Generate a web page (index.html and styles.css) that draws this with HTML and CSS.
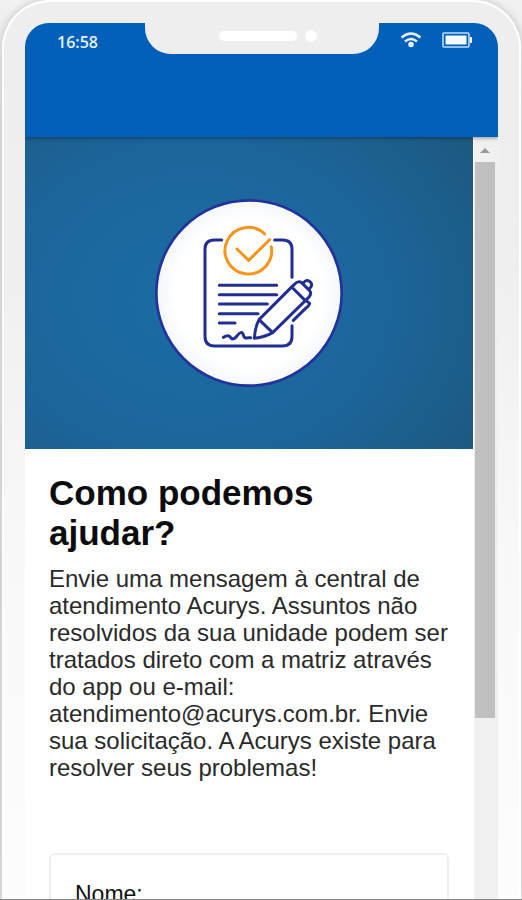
FILE: index.html
```html
<!DOCTYPE html>
<html lang="pt-BR">
<head>
<meta charset="utf-8">
<meta name="viewport" content="width=device-width, initial-scale=1">
<title>Como podemos ajudar?</title>
<link rel="stylesheet" href="styles.css">
</head>
<body>
<div class="phone">
  <div class="screen">
    <header class="app-bar">
      <div class="status-left"><time>16:58</time></div>
      <div class="notch"><span class="speaker"></span><span class="camera"></span></div>
      <div class="status-right">
        <svg class="wifi" viewBox="0 0 22 16" aria-hidden="true">
          <path d="M1.500 5.500Q11-2.500 20.500 5.500M5 9.500Q11 4.500 17 9.500"/>
          <circle cx="11" cy="12.500" r="2.800"/>
        </svg>
        <svg class="battery" viewBox="0 0 30 16" aria-hidden="true">
          <rect class="case" x="1" y="1" width="26" height="14" rx="1"/>
          <rect class="charge" x="3.500" y="3.500" width="21" height="9"/>
          <path class="charge" d="M28 5h1q1 0 1 1v4q0 1-1 1h-1z"/>
        </svg>
      </div>
    </header>
    <div class="viewport">
      <main class="page">
        <div class="banner">
          <svg class="emblem" viewBox="27 25 570 570" aria-hidden="true">
            <defs>
              <radialGradient id="disc"><stop offset=".8" stop-color="#fff"/><stop offset="1" stop-color="#f3f6f9"/></radialGradient>
            </defs>
            <circle cx="312" cy="310" r="278" fill="url(#disc)" stroke="#22329a" stroke-width="8"/>
            <g class="ink">
              <path d="M230 151H208Q180 151 180 179V440Q180 469 208 469H413Q441 469 441 440V408M389 151H413Q441 151 441 179V263"/>
              <path d="M223 287H395M223 315H395M223 343H367M223 372H339M223 400H270"/>
              <path d="M235 443C247 436 254 437 258 445C264 452 270 446 276 439C284 427 292 425 295 436C297 447 303 445 317 444"/>
              <path d="M328 446Q330 413 342 390L447 285Q458 272 469 278L494 303Q501 312 491 323L383 429Q360 442 328 446ZM342 390L383 429M440 292L481 333M475 280Q485 266 496 277Q505 286 493 298M482 332L494 341Q492 349 484 354L445 392"/>
            </g>
            <g class="accent">
              <path d="M359 133A70 70 0 1 0 379 171"/>
              <path d="M276 178L311 212L374 150"/>
            </g>
          </svg>
        </div>
        <section class="content">
          <h1>Como podemos ajudar?</h1>
          <p>Envie uma mensagem à central de atendimento Acurys. Assuntos não resolvidos da sua unidade podem ser tratados direto com a matriz através do app ou e-mail: atendimento@acurys.com.br. Envie sua solicitação. A Acurys existe para resolver seus problemas!</p>
          <form class="card">
            <label for="nome">Nome:</label>
            <input id="nome" name="nome" type="text">
          </form>
        </section>
      </main>
      <div class="scrollbar" aria-hidden="true">
        <span class="arrow"></span>
        <span class="thumb"></span>
      </div>
    </div>
  </div>
</div>
</body>
</html>
```
FILE: styles.css
```css
* {
  box-sizing: border-box;
}

body {
  margin: 0;
  height: 100vh;
  overflow: hidden;
  display: flex;
  background: linear-gradient(#f1f1f1, #e6e6e6 120px);
  border-bottom: 1px solid #858585;
  font-family: "Liberation Sans", Arial, sans-serif;
  color: #111;
}

.phone {
  flex: 1;
  min-width: 0;
  display: flex;
  margin: 0 1px 0 2px;
  padding: 21px 21px 0;
  border: 2px solid #fff;
  border-bottom: 0;
  border-radius: 48px 48px 0 0;
  background: linear-gradient(#eee, #efefef 30%, #f8f8f8 60%, #fcfcfc);
  box-shadow: 0 0 8px rgba(0, 0, 0, .2);
}

.screen {
  flex: 1;
  min-width: 0;
  display: flex;
  flex-direction: column;
  overflow: hidden;
  border-radius: 24px 24px 0 0;
  background: #fff;
}

.app-bar {
  flex: none;
  display: grid;
  grid-template-columns: 1fr 234px 1fr;
  align-items: start;
  height: 114px;
  background: #0360b9;
  color: #e6f0fc;
  box-shadow: 0 1px 4px rgba(0, 0, 0, .4);
  position: relative;
}

.status-left {
  padding: 8px 0 0 32px;
  font: 600 16px/22px "Open Sans", sans-serif;
}

.notch {
  height: 31px;
  display: flex;
  justify-content: flex-end;
  align-items: center;
  gap: 8px;
  padding: 0 62px 6px 0;
  border-radius: 0 0 26px 26px;
  background: #eee;
}

.speaker {
  width: 78px;
  height: 10px;
  border-radius: 5px;
  background: #fff;
}

.camera {
  width: 12px;
  height: 12px;
  border-radius: 50%;
  background: #fff;
}

.status-right {
  display: flex;
  justify-content: flex-end;
  align-items: center;
  gap: 20px;
  padding: 9px 26px 0 0;
}

.wifi {
  width: 22px;
  height: 16px;
  fill: none;
  stroke: #e6f0fc;
  stroke-width: 2.4;
}

.wifi circle {
  fill: #e6f0fc;
  stroke: none;
}

.battery {
  width: 30px;
  height: 16px;
}

.case {
  fill: none;
  stroke: #c3daf5;
  stroke-width: 1.6;
}

.charge {
  fill: #f4f9ff;
}

.viewport {
  flex: 1;
  min-height: 0;
  display: flex;
}

.page {
  flex: 1;
  min-width: 0;
  overflow: hidden;
}

.banner {
  display: flex;
  align-items: center;
  justify-content: center;
  aspect-ratio: 448 / 312;
  background: radial-gradient(ellipse 85% 100% at 38% 52%, #1b6ca6, #1c659a 50%, #1d5578);
}

.emblem {
  width: 190px;
  height: 190px;
}

.ink,
.accent {
  fill: none;
  stroke: #202f91;
  stroke-width: 9;
  stroke-linecap: round;
  stroke-linejoin: round;
}

.accent {
  stroke: #f7941d;
}

.content {
  padding: 24px;
}

h1 {
  margin: 0 0 12px;
  font-size: 35px;
  line-height: 40px;
  color: #0c0c0c;
}

p {
  margin: 0 0 72px;
  font-size: 24px;
  line-height: 27px;
  color: #2a2a2a;
}

.card {
  display: flex;
  flex-direction: column;
  gap: 12px;
  padding: 24px;
  border: 2px solid #efefef;
  border-radius: 6px;
}

.card label {
  font-size: 23px;
  line-height: 30px;
}

.card input {
  width: 100%;
  height: 40px;
  border: 1px solid #ccc;
  border-radius: 4px;
}

.scrollbar {
  flex: none;
  width: 25px;
  display: flex;
  flex-direction: column;
  align-items: center;
  padding: 11px 3px 0 1px;
  border-left: 1px solid #fff;
  background: #f0f0f0;
}

.arrow {
  border: 5px solid transparent;
  border-top: 0;
  border-bottom-color: #999;
}

.thumb {
  width: 20px;
  height: 74%;
  margin-top: 9px;
  background: #c0c0c0;
}
```
